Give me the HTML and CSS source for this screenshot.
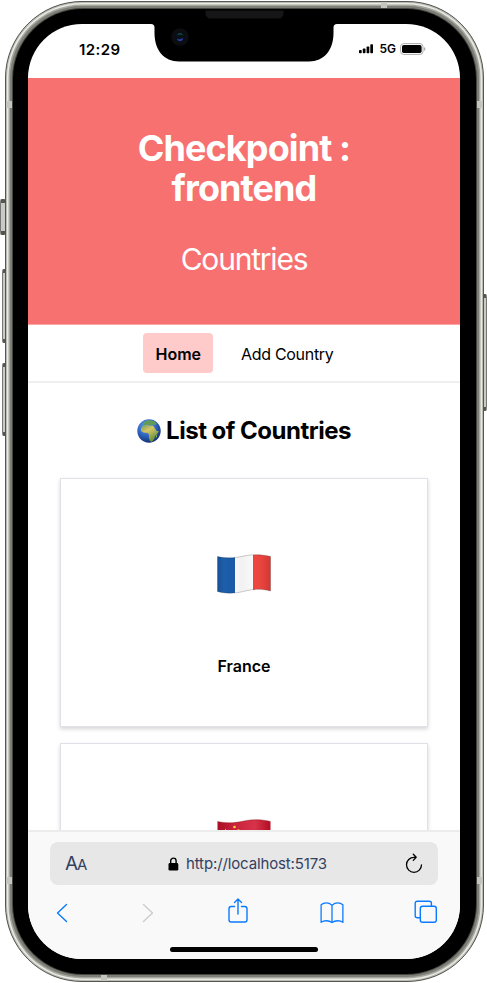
FILE: index.html
```html
<!DOCTYPE html>
<html lang="en">
<head>
<meta charset="utf-8">
<title>Countries</title>
<link rel="stylesheet" href="styles.css">
</head>
<body>
<div class="phone">
  <i class="side silent"></i><i class="side vol-up"></i><i class="side vol-down"></i><i class="side power"></i>
  <div class="frame">
    <i class="band b1"></i><i class="band b2"></i><i class="band b3"></i><i class="band b4"></i><i class="band b5"></i><i class="band b6"></i>
    <div class="bezel">
      <div class="screen">
        <div class="status">
          <span class="time">12:29</span>
          <span class="signal">
            <svg width="15" height="10" viewBox="0 0 15 10"><rect x="0" y="6" width="2.7" height="3.3" rx=".7"/><rect x="3.8" y="4.5" width="2.7" height="4.8" rx=".7"/><rect x="7.6" y="2.5" width="2.7" height="6.8" rx=".7"/><rect x="11.3" y=".3" width="2.7" height="9" rx=".7"/></svg>
            <span class="net">5G</span>
            <svg width="26" height="12" viewBox="0 0 26 12"><rect x=".6" y=".6" width="22.4" height="10.8" rx="3" fill="none" stroke="#aaa"/><rect x="2" y="2" width="19.6" height="8" rx="1.7"/><path d="M24.2 4v4q1.2-.8 1.2-2t-1.2-2" fill="#999"/></svg>
          </span>
        </div>
        <main class="page">
          <header class="hero"><h1>Checkpoint : frontend</h1><p>Countries</p></header>
          <nav class="nav"><a class="link active">Home</a><a class="link">Add Country</a></nav>
          <section class="list">
            <h2>
              <svg width="24" height="24" viewBox="0 0 24 24">
                <defs><radialGradient id="sea" cx=".4" cy=".3" r=".75"><stop offset="0" stop-color="#69a8ee"/><stop offset=".55" stop-color="#2c62bd"/><stop offset="1" stop-color="#122a6b"/></radialGradient>
                <linearGradient id="land" x2=".6" y2="1"><stop stop-color="#6f9d54"/><stop offset=".4" stop-color="#d5c668"/><stop offset="1" stop-color="#5c8b35"/></linearGradient></defs>
                <circle cx="12" cy="12" r="11.7" fill="url(#sea)"/>
                <path d="M6 5l2-2.5 4-1.5 5 1 3 3-2 1-3-.5-2 1-3-1-3 1z" fill="#629b58"/>
                <path d="M4 9l2-2.6 4-.5 2 .9 4-.2 2 3 1.7 2.5 2.2.2-2 3-2 2-.7 3-2.5 2.8-1.7-1-1.2-3.4.3-2.8-1.4-2L6.500 13.500 4 12z" fill="url(#land)"/>
                <path d="M19 16.500l1.200-1-.5 2.700-1 .8z" fill="#8eaf50"/>
              </svg>
              <span>List of Countries</span>
            </h2>
            <article class="card">
              <svg class="flag" width="54" height="40" viewBox="0 0 54 40">
                <defs>
                  <clipPath id="wave"><path d="M.5 2.500C9 4.600 18 4 27 2S45 .4 53.500 2.500V37C45 34.500 36 35 27 37.300S9 40 .5 37.500z"/></clipPath>
                  <linearGradient id="shade"><stop stop-color="#000" stop-opacity=".12"/><stop offset=".2" stop-color="#fff" stop-opacity=".03"/><stop offset=".45" stop-color="#000" stop-opacity=".04"/><stop offset=".72" stop-color="#fff" stop-opacity=".06"/><stop offset="1" stop-color="#000" stop-opacity=".12"/></linearGradient>
                </defs>
                <g clip-path="url(#wave)"><path fill="#1558a8" d="M0 0h18v40H0z"/><path fill="#fcfcfc" d="M18 0h18v40H18z"/><path fill="#ed3b35" d="M36 0h18v40H36z"/><path fill="url(#shade)" d="M0 0h54v40H0z"/></g>
                <path d="M.5 2.500C9 4.600 18 4 27 2S45 .4 53.500 2.500V37C45 34.500 36 35 27 37.300S9 40 .5 37.500z" fill="none" stroke="#000" stroke-opacity=".2"/>
              </svg>
              <span>France</span>
            </article>
            <article class="card">
              <svg class="flag" width="54" height="40" viewBox="0 0 54 40">
                <defs><linearGradient id="red"><stop stop-color="#a70f24"/><stop offset=".3" stop-color="#c7213a"/><stop offset=".7" stop-color="#d7334a"/><stop offset="1" stop-color="#b00c22"/></linearGradient></defs>
                <g clip-path="url(#wave)"><path fill="url(#red)" d="M0 0h54v40H0z"/>
                <g fill="#f8d437"><path d="M8.500 9.500l1.300 3.500 3.700.2-2.900 2.300 1 3.600-3.100-2-3.100 2 1-3.600-2.900-2.300 3.700-.2z"/><circle cx="17.500" cy="8" r="1.300"/><circle cx="21.500" cy="11.500" r="1.200"/><circle cx="21.500" cy="17" r="1.200"/><circle cx="17.500" cy="21" r="1.200"/></g></g>
                <path d="M.5 2.500C9 4.600 18 4 27 2S45 .4 53.500 2.500" fill="none" stroke="#700" stroke-opacity=".35"/>
              </svg>
            </article>
          </section>
        </main>
        <footer class="browser">
          <div class="address">
            <span class="aa">A<small>A</small></span>
            <span class="url"><svg width="11" height="14" viewBox="0 0 11 14"><rect x=".5" y="6" width="9.800" height="7.600" rx="1.400"/><path d="M2.700 7V3.800a2.700 2.700 0 0 1 5.400 0V7" fill="none" stroke="#000" stroke-width="1.400"/></svg>http://localhost:5173</span>
            <svg class="reload" width="18" height="22" viewBox="0 0 18 22" fill="none" stroke="#000" stroke-width="1.300" stroke-linecap="round" stroke-linejoin="round"><path d="M10.800 4.300H9A7.500 7.500 0 1 0 16.500 11.800M8.300 1.200l2.900 3.100-2.900 3.100"/></svg>
          </div>
          <div class="tools">
            <svg width="12" height="20" viewBox="0 0 12 20"><path d="M10.500 1.500L1.500 10l9 8.500"/></svg>
            <svg class="off" width="12" height="20" viewBox="0 0 12 20"><path d="M1.500 1.500l9 8.500-9 8.500"/></svg>
            <svg class="share" width="20" height="26" viewBox="0 0 20 26"><path d="M6.500 8.500H3.200Q1 8.500 1 10.700v11.100Q1 24 3.200 24h13.600q2.200 0 2.200-2.200V10.700q0-2.200-2.200-2.200h-3.300M10 16V1M6.500 4.500L10 1l3.500 3.500"/></svg>
            <svg width="24" height="22" viewBox="0 0 26 22" preserveAspectRatio="none"><path d="M13 3.200Q10 .9 7 .9 3.500.9 1.200 2.700v17.600q2.300-1.600 5.800-1.600 3.500 0 6 1.800 2.500-1.800 6-1.800t5.800 1.600V2.700Q22.500.9 19 .9q-3 0-6 2.300zv17.300"/></svg>
            <svg class="tabs" width="24" height="24" viewBox="0 0 24 24"><path d="M6 17.800H3.300Q1.200 17.800 1.200 15.700V3.300Q1.200 1.200 3.300 1.200h12Q17.400 1.200 17.400 3.300V6"/><rect x="6.300" y="6.300" width="16" height="16" rx="2.200"/></svg>
          </div>
          <div class="home-bar"></div>
        </footer>
      </div>
      <div class="notch"><svg width="186" height="39" viewBox="0 0 186 39"><path d="M0 0h186v1q-3.500 0-3.500 3.500V10C182.500 27 173 38.500 158 38.500H28C13 38.500 3.500 27 3.500 10V4.500Q3.500 1 0 1z"/></svg></div>
      <div class="speaker"></div>
      <svg class="camera" width="18" height="18" viewBox="0 0 18 18"><circle cx="9" cy="9" r="8.700" fill="#0c0d10"/><circle cx="9" cy="9" r="4.300" fill="#071019"/><path d="M5.600 7.200q3.400-4.500 6.800 0-3.400-1.500-6.800 0" fill="#174b4b"/><path d="M5.800 10.500q3.200 1.500 6.300-.5-.5 3.600-3.500 3.300-2.200-.3-2.800-2.800" fill="#2c3c9c"/></svg>
    </div>
  </div>
</div>
</body>
</html>
```
FILE: styles.css
```css
* { box-sizing: border-box; }
body { margin: 0; background: #fff; font-family: Inter, "Liberation Sans", sans-serif; color: #000; }
svg { display: block; flex: none; }
h1, h2, p { margin: 0; }
.phone { position: relative; width: 487px; height: 983px; padding: 1px 3px 1px 5px; overflow: hidden; }
.frame { position: relative; height: 981px; padding: 7px; border-radius: 77px; background: #7d7f77; border: 1px solid #555650; box-shadow: inset 0 0 0 1px #b9bbb4, inset 0 0 0 2.500px #e9eae4, inset 0 0 0 4px #a6a79f; }
.bezel { position: relative; height: 965px; padding: 15px 16px 15px 15px; border-radius: 70px; background: #000; box-shadow: 0 0 0 1px #444540; }
.screen { height: 935px; border-radius: 54px; overflow: hidden; background: #fff; display: flex; flex-direction: column; }
.status { flex: none; height: 54px; display: flex; justify-content: space-between; padding: 16px 34px 0 51px; }
.time { font-size: 15px; font-weight: 600; line-height: 20px; letter-spacing: .4px; }
.signal { display: flex; align-items: center; height: 17px; }
.net { font-size: 12px; font-weight: 600; margin: 0 4px 0 5px; }
.page { height: 752px; overflow: hidden; flex: none; }
.hero { height: 247px; background: #f87171; color: #fff; text-align: center; padding: 50px 80px 0; border-bottom: 1px solid #fca5a5; }
.hero h1 { font-size: 36px; line-height: 40px; font-weight: 700; letter-spacing: -.9px; }
.hero p { margin-top: 33px; font-size: 30px; line-height: 36px; letter-spacing: -1.200px; }
.nav { height: 58px; display: flex; justify-content: center; align-items: flex-start; gap: 16px; padding: 8px 15px 0 16px; border-bottom: 2px solid #efefef; }
.link { height: 40px; padding: 9px 12px 7px; border-radius: 4px; font-size: 16px; line-height: 24px; letter-spacing: -.3px; }
.active { background: #fecaca; font-weight: 600; letter-spacing: 0; }
.list { padding: 32px 32px 0; display: flex; flex-direction: column; gap: 16px; }
.list h2 { height: 47px; display: flex; justify-content: center; gap: 5px; font-size: 24px; line-height: 32px; font-weight: 700; letter-spacing: -.5px; }
.list h2 svg { margin-top: 4px; }
.card { flex: none; height: 249px; border: 1px solid #e0e1e6; display: flex; flex-direction: column; align-items: center; justify-content: space-between; padding: 75px 0 48px; box-shadow: 0 2px 4px rgba(0,0,0,.17); font-size: 16px; line-height: 24px; font-weight: 600; }
.browser { flex: none; height: 129px; background: #f9f9f9; border-top: 2px solid #ececec; padding: 10px 22px 0; }
.address { height: 43px; border-radius: 8px; background: #e7e7e7; display: flex; align-items: center; justify-content: space-between; padding: 0 15px; color: #334160; }
.aa { font-size: 19px; width: 25px; white-space: nowrap; letter-spacing: -1px; }
.aa small { font-size: 15px; }
.url { display: flex; gap: 7px; align-items: center; font-size: 15px; letter-spacing: -.130px; }
.tools { height: 54px; display: grid; grid-template-columns: 86.500px 86px 92px 93.500px 24px; align-items: center; margin-left: 5.500px; padding-top: 2px; fill: none; stroke: #0a7aff; stroke-width: 1.400px; stroke-linecap: round; stroke-linejoin: round; }
.tools .share { margin-top: -4px; }
.tools .tabs { margin-top: -3px; }
.tools .off { stroke: #ccc; }
.home-bar { width: 148px; height: 5px; margin: 8px auto 0; border-radius: 3px; background: #000; }
.notch { position: absolute; left: 138px; top: 14px; }
.speaker { position: absolute; left: 192px; top: 1px; width: 79px; height: 9px; border-radius: 0 0 5px 5px; background: #161616; border: 1px solid #090909; }
.camera { position: absolute; left: 158px; top: 19px; }
.side { position: absolute; left: 0; width: 6px; background: #c9cac7; border: 1px solid #777873; border-top: 4px solid #555650; border-bottom: 4px solid #555650; border-radius: 2px; }
.silent { top: 199px; height: 36px; }
.vol-up { top: 269px; height: 74px; left: 2px; }
.vol-down { top: 363px; height: 73px; left: 2px; }
.power { top: 294px; height: 117px; left: 482px; width: 5px; }
.band { position: absolute; background: #c4c5bf; width: 6px; height: 7px; }
.b1 { left: 0; top: 99px; }
.b2 { right: 0; top: 99px; }
.b3 { left: 0; top: 875px; }
.b4 { right: 0; top: 875px; }
.b5 { left: 375px; top: 0; }
.b6 { left: 95px; bottom: 0; }
```
